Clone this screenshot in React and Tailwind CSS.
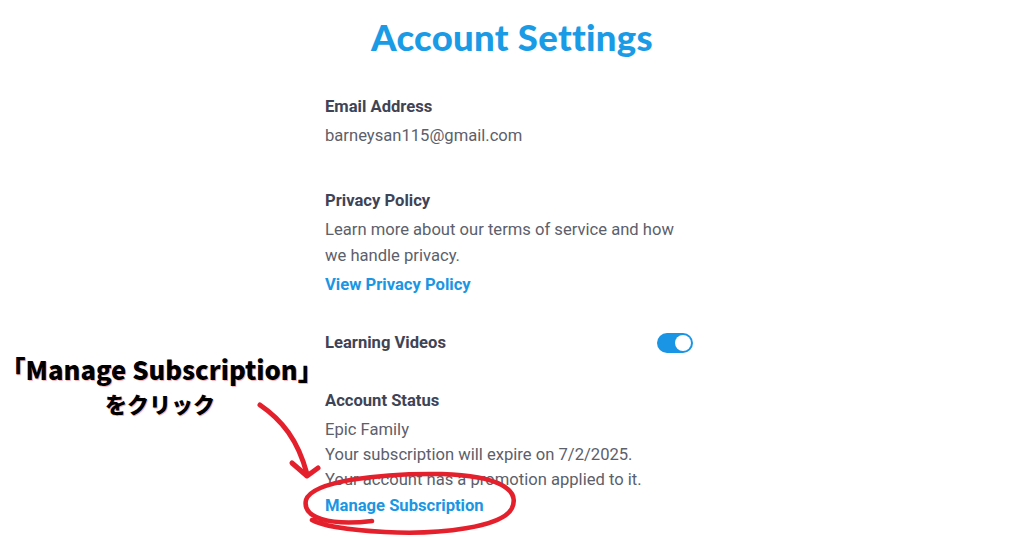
import React from "react";

export default function App() {
  const body = { fontFamily: "Roboto, 'Liberation Sans', sans-serif" };
  return (
    <div className="relative w-[1024px] h-[538px] bg-white overflow-hidden" style={body}>
      <div className="pt-[16px] text-center">
        <h1
          className="text-[36.5px] leading-[42px] text-[#1a9be6] tracking-[0.3px]"
          style={{ fontFamily: "Lato, Inter, sans-serif", fontWeight: 900 }}
        >
          Account Settings
        </h1>
      </div>

      <div className="mx-auto w-[374px] mt-[36px] text-[16.6px]">
        <div className="font-bold text-[#3e4456] leading-[26px]">Email Address</div>
        <div className="mt-[3px] text-[#5c606b] leading-[26px]">barneysan115@gmail.com</div>

        <div className="mt-[39px] font-bold text-[#3e4456] leading-[26px]">Privacy Policy</div>
        <div className="mt-[3px] text-[#5c606b] leading-[26px] w-[368px]">
          Learn more about our terms of service and how we handle privacy.
        </div>
        <div className="mt-[3px] font-bold text-[#1b96e3] leading-[26px]">View Privacy Policy</div>

        <div className="mt-[32px] flex items-center justify-between pr-[6px]">
          <div className="font-bold text-[#3e4456] leading-[26px]">Learning Videos</div>
          <div className="w-[36px] h-[20px] rounded-full bg-[#1a94e4] flex items-center justify-end pr-[2px]">
            <div className="w-[16px] h-[16px] rounded-full bg-white" />
          </div>
        </div>

        <div className="mt-[32px] font-bold text-[#3e4456] leading-[26px]">Account Status</div>
        <div className="mt-[3px] text-[#5c606b] leading-[25px]">
          <div>Epic Family</div>
          <div>Your subscription will expire on 7/2/2025.</div>
          <div>Your account has a promotion applied to it.</div>
        </div>
        <div className="mt-[1px] font-bold text-[#1b96e3] leading-[26px]">Manage Subscription</div>
      </div>

      <div
        className="absolute left-0 top-[351px] w-[320px] text-center text-black font-black"
        style={{
          fontFamily: "'Noto Sans CJK JP', 'Noto Sans', sans-serif",
          textShadow: "1px 1px 0 rgba(230,40,50,0.35)",
        }}
      >
        <div className="text-[25.6px] leading-[35px]">「Manage Subscription」</div>
        <div className="text-[22px] leading-[34px]">をクリック</div>
      </div>

      <svg className="absolute left-0 top-0 pointer-events-none" width="1024" height="538" viewBox="0 0 1024 538">
        <g fill="none" stroke="#e3202b" strokeLinecap="round" strokeLinejoin="round">
          <path d="M260 405 C 282 420, 298 440, 307 474" strokeWidth="5" />
          <path d="M292 463 L 307 476 L 318 468" strokeWidth="5" />
          <path
            d="M372 521 C 330 526, 302 518, 306 500 C 312 481, 380 473, 442 474 C 500 476, 520 490, 512 508 C 503 527, 440 535, 385 532 C 350 530, 322 526, 312 520"
            strokeWidth="4.5"
          />
        </g>
      </svg>
    </div>
  );
}
